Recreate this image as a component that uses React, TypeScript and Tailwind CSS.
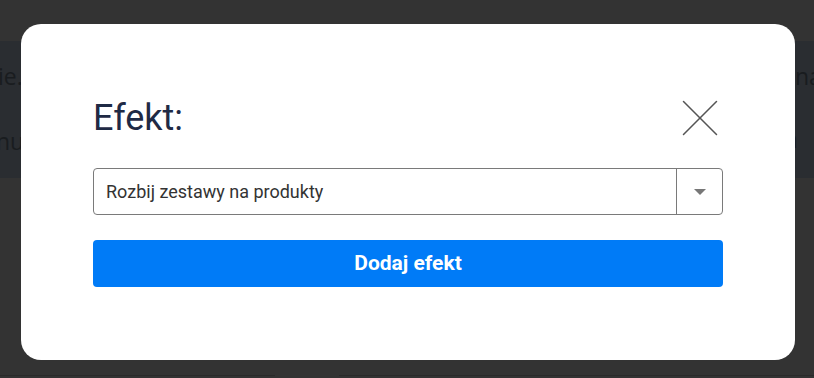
import { X } from "lucide-react";

export default function App() {
  return (
    <div className="relative h-[378px] w-[814px] overflow-hidden bg-[#333333] font-['Roboto',sans-serif]">
      {/* Page underneath the overlay */}
      <div className="flex h-full flex-col">
        <div className="h-[41px]" />
        <div className="relative h-[137px] bg-[#2a2d31] font-['Open_Sans',sans-serif] text-[23px] leading-[32px] text-[#191c1f]">
          <span className="absolute left-[-2px] top-[19px]">ie.</span>
          <span className="absolute left-[-4px] top-[84px]">nu</span>
          <span className="absolute left-[795px] top-[19px]">na</span>
          <span className="absolute left-[785px] top-[82px]">a z</span>
        </div>
        <div className="flex-1" />
        <div className="flex h-[3px] gap-[64px]">
          <div className="w-[275px] border-t border-[#2a2a2a]" />
          <div className="flex-1 border-t border-[#2a2a2a]" />
        </div>
      </div>

      {/* Modal */}
      <div className="absolute left-[21px] top-[24px] flex h-[336px] w-[774px] flex-col rounded-[20px] bg-white px-[72px] pt-[70px]">
        <div className="flex h-[48px] items-center justify-between">
          <h2 className="text-[36px] leading-[48px] font-normal text-[#1f2a45]">Efekt:</h2>
          <button className="mr-[-10px] text-[#555]">
            <X className="h-[66px] w-[66px]" strokeWidth={0.55} />
          </button>
        </div>

        <div className="mt-[26px] flex h-[47px] items-stretch rounded-[4px] border border-[#7a7a7a]">
          <div className="flex flex-1 items-center pl-[12px] text-[18px] text-[#333]">Rozbij zestawy na produkty</div>
          <div className="flex w-[46px] items-center justify-center border-l border-[#7a7a7a]">
            <div className="h-0 w-0 border-x-[6px] border-t-[6px] border-x-transparent border-t-[#777]" />
          </div>
        </div>

        <button className="mt-[25px] h-[47px] w-full rounded-[4px] bg-[#007bf7] text-[21px] font-bold text-white">
          Dodaj efekt
        </button>
      </div>
    </div>
  );
}
